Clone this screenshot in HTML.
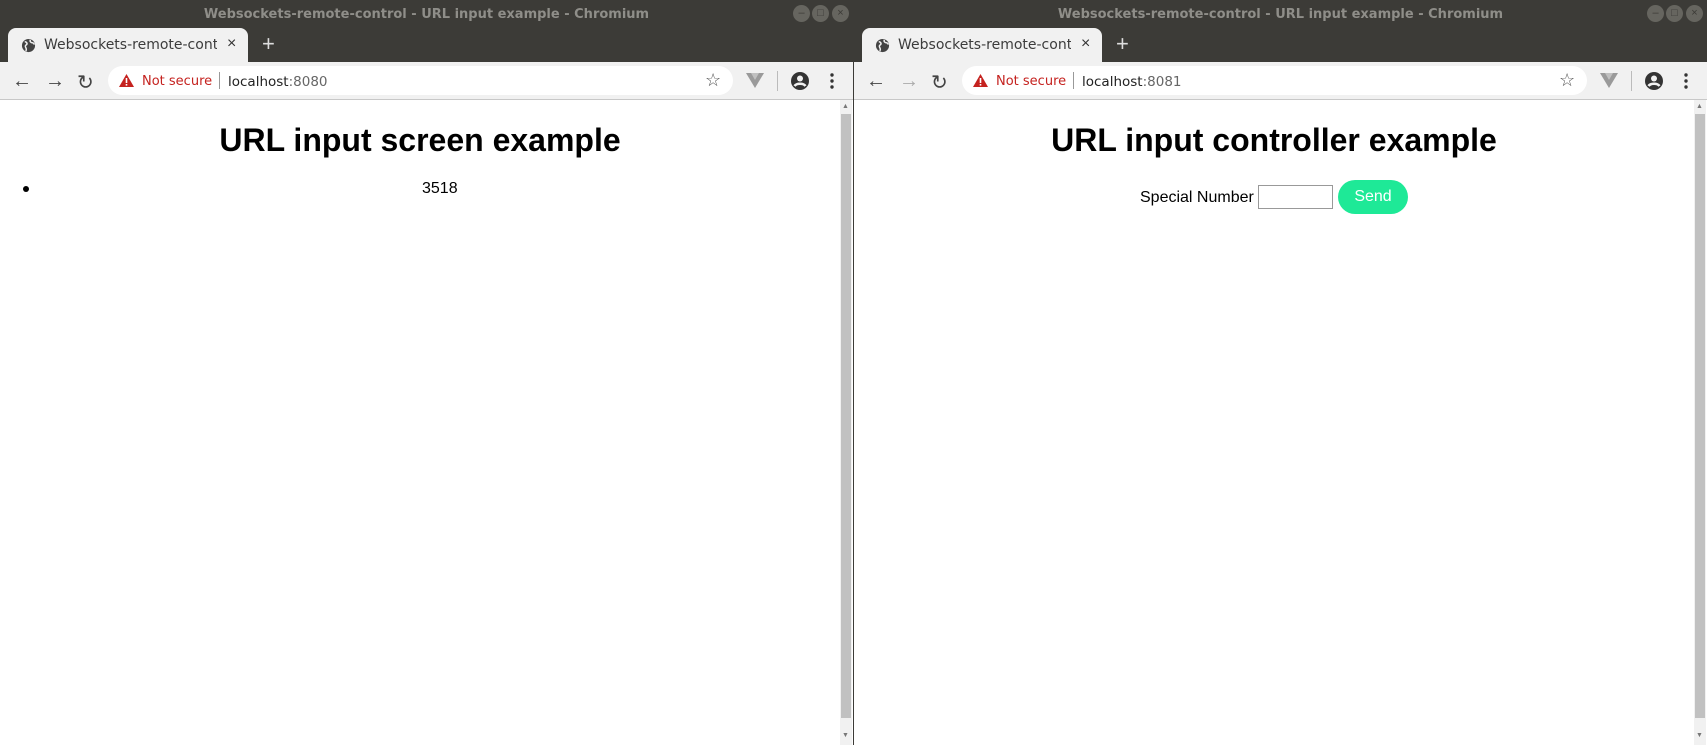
<!DOCTYPE html>
<html><head><meta charset="utf-8"><style>
*{margin:0;padding:0;box-sizing:border-box}
body{width:1707px;height:745px;overflow:hidden;background:#3c3b37;font-family:"Liberation Sans",sans-serif;position:relative}
.win{position:absolute;top:0;width:853px;height:745px;background:#3c3b37;overflow:hidden}
.title{position:absolute;top:7px;left:0;width:853px;text-align:center;font:bold 13px "DejaVu Sans",sans-serif;color:#8f8e89}
.wb{position:absolute;top:5px;width:17px;height:17px;border-radius:50%;background:#66655f;color:#3c3b37;font-size:11px;line-height:17px;text-align:center}
.tab{position:absolute;left:8px;top:28px;width:240px;height:35px;background:#f1f1f1;border-radius:8px 8px 0 0}
.tabtxt{position:absolute;left:36px;top:9px;font:14px "DejaVu Sans",sans-serif;color:#3c3c3c;white-space:nowrap;width:173px;overflow:hidden}
.tb{position:absolute;left:0;top:62px;width:853px;height:38px;background:#f1f1f1;border-bottom:1px solid #c8c8c8}
.url{position:absolute;left:108px;top:4px;width:625px;height:29px;background:#fff;border-radius:15px}
.content{position:absolute;left:0;top:100px;width:853px;height:645px;background:#fff}
.sb{position:absolute;right:1px;top:0;width:12px;height:645px;background:#f1f1f1}
.sbt{position:absolute;left:1px;top:14px;width:10px;height:604px;background:#c1c1c1}
h1{position:absolute;top:22px;width:840px;text-align:center;font:bold 32px "Liberation Sans",sans-serif;color:#000}
.ut{position:absolute;top:8px;font:13.5px 'DejaVu Sans',sans-serif}
</style></head><body>

<div class="win" style="left:0">
<div class="title">Websockets-remote-control - URL input example - Chromium</div>
<div class="wb" style="left:793px">–</div><div class="wb" style="left:812px">□</div><div class="wb" style="left:832px">×</div>
<div class="tab">
<svg style="position:absolute;left:13px;top:10px" width="15" height="15" viewBox="0 0 16 16"><circle cx="8" cy="8" r="7" fill="#444"/><path d="M4 4c2 0 3 2 2 3s-2 1-1 3 1 3 0 4M10 2c-1 2 1 3 2 3s2 1 2 2" stroke="#f1f1f1" stroke-width="1.6" fill="none"/></svg>
<div class="tabtxt">Websockets-remote-control</div>
<div style="position:absolute;left:219px;top:7px;font-size:16px;color:#333">×</div>
</div>
<div style="position:absolute;left:262px;top:31px;font-size:22px;color:#ddd">+</div>
<div class="tb">
<div style="position:absolute;left:12px;top:8px;font-size:20px;color:#444">←</div>
<div style="position:absolute;left:45px;top:8px;font-size:20px;color:#444">→</div>
<div style="position:absolute;left:77px;top:8px;font-size:20px;color:#444">↻</div>
<div class="url">
<svg style="position:absolute;left:11px;top:8px" width="15" height="13" viewBox="0 0 15 13"><path d="M7.5 0L15 13H0z" fill="#c5221f"/><rect x="6.7" y="4" width="1.6" height="5" fill="#fff"/><rect x="6.7" y="10" width="1.6" height="1.6" fill="#fff"/></svg>
<span class="ut" style="left:34px;color:#c5221f;font-size:13px">Not secure</span>
<span style="position:absolute;left:111px;top:6px;width:1px;height:17px;background:#999"></span>
<span class="ut" style="left:120px;color:#222">localhost<span style="color:#666">:8080</span></span>
<span style="position:absolute;left:597px;top:4px;font-size:18px;color:#555">☆</span>
</div>
<svg style="position:absolute;left:746px;top:11px" width="18" height="15" viewBox="0 0 18 15"><path d="M0 0h18L9 15z" fill="#9a9a9a"/><path d="M5 0h8L9 7z" fill="#c0c0c0"/></svg>
<div style="position:absolute;left:777px;top:9px;width:1px;height:20px;background:#bbb"></div>
<svg style="position:absolute;left:791px;top:10px" width="18" height="18" viewBox="0 0 18 18"><circle cx="9" cy="9" r="9" fill="#333"/><circle cx="9" cy="6.5" r="3" fill="#f1f1f1"/><path d="M3.5 14c2-3 9-3 11 0" stroke="#f1f1f1" stroke-width="2.5" fill="none"/></svg>
<svg style="position:absolute;left:830px;top:11px" width="4" height="16"><circle cx="2" cy="2" r="1.7" fill="#333"/><circle cx="2" cy="8" r="1.7" fill="#333"/><circle cx="2" cy="14" r="1.7" fill="#333"/></svg>
</div>
<div class="content">
<h1>URL input screen example</h1>
<div style="position:absolute;left:23px;top:86px;width:6px;height:6px;border-radius:50%;background:#000"></div>
<div style="position:absolute;left:422px;top:80px;font-size:16px;color:#000">3518</div>
<div class="sb"><div class="sbt"></div><div style="position:absolute;left:2px;top:3px;font-size:7px;color:#777">▲</div><div style="position:absolute;left:2px;top:632px;font-size:7px;color:#777">▼</div></div>
</div>
</div>

<div class="win" style="left:854px">
<div class="title">Websockets-remote-control - URL input example - Chromium</div>
<div class="wb" style="left:793px">–</div><div class="wb" style="left:812px">□</div><div class="wb" style="left:832px">×</div>
<div class="tab">
<svg style="position:absolute;left:13px;top:10px" width="15" height="15" viewBox="0 0 16 16"><circle cx="8" cy="8" r="7" fill="#444"/><path d="M4 4c2 0 3 2 2 3s-2 1-1 3 1 3 0 4M10 2c-1 2 1 3 2 3s2 1 2 2" stroke="#f1f1f1" stroke-width="1.6" fill="none"/></svg>
<div class="tabtxt">Websockets-remote-control</div>
<div style="position:absolute;left:219px;top:7px;font-size:16px;color:#333">×</div>
</div>
<div style="position:absolute;left:262px;top:31px;font-size:22px;color:#ddd">+</div>
<div class="tb">
<div style="position:absolute;left:12px;top:8px;font-size:20px;color:#444">←</div>
<div style="position:absolute;left:45px;top:8px;font-size:20px;color:#aaa">→</div>
<div style="position:absolute;left:77px;top:8px;font-size:20px;color:#444">↻</div>
<div class="url">
<svg style="position:absolute;left:11px;top:8px" width="15" height="13" viewBox="0 0 15 13"><path d="M7.5 0L15 13H0z" fill="#c5221f"/><rect x="6.7" y="4" width="1.6" height="5" fill="#fff"/><rect x="6.7" y="10" width="1.6" height="1.6" fill="#fff"/></svg>
<span class="ut" style="left:34px;color:#c5221f;font-size:13px">Not secure</span>
<span style="position:absolute;left:111px;top:6px;width:1px;height:17px;background:#999"></span>
<span class="ut" style="left:120px;color:#222">localhost<span style="color:#666">:8081</span></span>
<span style="position:absolute;left:597px;top:4px;font-size:18px;color:#555">☆</span>
</div>
<svg style="position:absolute;left:746px;top:11px" width="18" height="15" viewBox="0 0 18 15"><path d="M0 0h18L9 15z" fill="#9a9a9a"/><path d="M5 0h8L9 7z" fill="#c0c0c0"/></svg>
<div style="position:absolute;left:777px;top:9px;width:1px;height:20px;background:#bbb"></div>
<svg style="position:absolute;left:791px;top:10px" width="18" height="18" viewBox="0 0 18 18"><circle cx="9" cy="9" r="9" fill="#333"/><circle cx="9" cy="6.5" r="3" fill="#f1f1f1"/><path d="M3.5 14c2-3 9-3 11 0" stroke="#f1f1f1" stroke-width="2.5" fill="none"/></svg>
<svg style="position:absolute;left:830px;top:11px" width="4" height="16"><circle cx="2" cy="2" r="1.7" fill="#333"/><circle cx="2" cy="8" r="1.7" fill="#333"/><circle cx="2" cy="14" r="1.7" fill="#333"/></svg>
</div>
<div class="content">
<h1>URL input controller example</h1>
<div style="position:absolute;left:286px;top:89px;font-size:16px;color:#000">Special Number</div>
<div style="position:absolute;left:404px;top:85px;width:75px;height:24px;border:1px solid #999;background:#fff"></div>
<div style="position:absolute;left:484px;top:80px;width:70px;height:34px;border-radius:17px;background:#1ee997;color:#fff;font-size:16px;text-align:center;line-height:34px">Send</div>
<div class="sb"><div class="sbt"></div><div style="position:absolute;left:2px;top:3px;font-size:7px;color:#777">▲</div><div style="position:absolute;left:2px;top:632px;font-size:7px;color:#777">▼</div></div>
</div>
</div>
</body></html>
